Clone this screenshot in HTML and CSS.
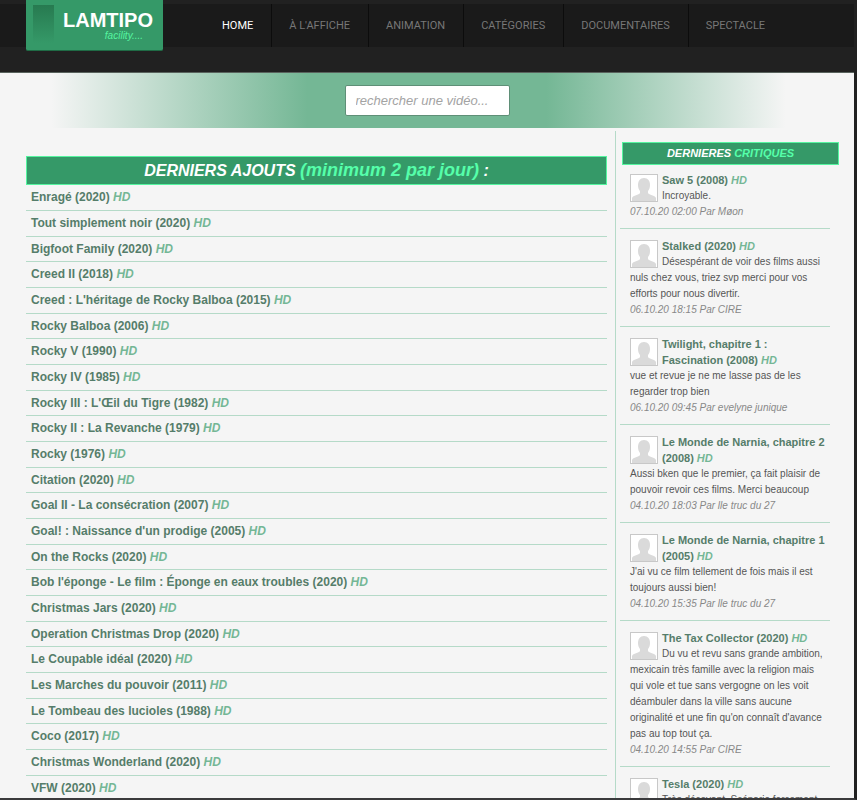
FILE: index.html
```html
<!DOCTYPE html>
<html lang="fr">
<head>
    <meta charset="UTF-8">
    <meta name="viewport" content="width=device-width, initial-scale=1.0">
    <title>Lamtipo</title>
    <link rel="stylesheet" href="styles.css">
</head>
<body>
    <div class="page">
        <header class="header">
            <div class="topbar">
                <a href="#" class="logo">
                    <span class="logo-mark"></span>
                    <span class="logo-text">
                        <span class="logo-name">LAMTIPO</span>
                        <em class="logo-sub">facility....</em>
                    </span>
                </a>
                <nav class="menu">
                    <a href="#" class="active">HOME</a>
                    <a href="#">À L'AFFICHE</a>
                    <a href="#">ANIMATION</a>
                    <a href="#">CATÉGORIES</a>
                    <a href="#">DOCUMENTAIRES</a>
                    <a href="#">SPECTACLE</a>
                </nav>
            </div>
        </header>
        <form class="search">
            <input type="text" class="search-input" aria-label="Rechercher une vidéo" placeholder="rechercher une vidéo...">
        </form>
        <div class="content">
            <main class="main">
                <h1 class="main-title">DERNIERS AJOUTS <span>(minimum 2 par jour)</span> :</h1>
                <ul class="films">
                    <li><a href="#">Enragé (2020) <em>HD</em></a></li>
                    <li><a href="#">Tout simplement noir (2020) <em>HD</em></a></li>
                    <li><a href="#">Bigfoot Family (2020) <em>HD</em></a></li>
                    <li><a href="#">Creed II (2018) <em>HD</em></a></li>
                    <li><a href="#">Creed : L'héritage de Rocky Balboa (2015) <em>HD</em></a></li>
                    <li><a href="#">Rocky Balboa (2006) <em>HD</em></a></li>
                    <li><a href="#">Rocky V (1990) <em>HD</em></a></li>
                    <li><a href="#">Rocky IV (1985) <em>HD</em></a></li>
                    <li><a href="#">Rocky III : L'Œil du Tigre (1982) <em>HD</em></a></li>
                    <li><a href="#">Rocky II : La Revanche (1979) <em>HD</em></a></li>
                    <li><a href="#">Rocky (1976) <em>HD</em></a></li>
                    <li><a href="#">Citation (2020) <em>HD</em></a></li>
                    <li><a href="#">Goal II - La consécration (2007) <em>HD</em></a></li>
                    <li><a href="#">Goal! : Naissance d'un prodige (2005) <em>HD</em></a></li>
                    <li><a href="#">On the Rocks (2020) <em>HD</em></a></li>
                    <li><a href="#">Bob l'éponge - Le film : Éponge en eaux troubles (2020) <em>HD</em></a></li>
                    <li><a href="#">Christmas Jars (2020) <em>HD</em></a></li>
                    <li><a href="#">Operation Christmas Drop (2020) <em>HD</em></a></li>
                    <li><a href="#">Le Coupable idéal (2020) <em>HD</em></a></li>
                    <li><a href="#">Les Marches du pouvoir (2011) <em>HD</em></a></li>
                    <li><a href="#">Le Tombeau des lucioles (1988) <em>HD</em></a></li>
                    <li><a href="#">Coco (2017) <em>HD</em></a></li>
                    <li><a href="#">Christmas Wonderland (2020) <em>HD</em></a></li>
                    <li><a href="#">VFW (2020) <em>HD</em></a></li>
                </ul>
            </main>
            <aside class="sidebar">
                <h2 class="side-title">DERNIERES <span>CRITIQUES</span></h2>
                <!-- Shared avatar shape -->
                <svg width="0" height="0" class="defs">
                    <symbol id="avatar" viewBox="0 0 26 26">
                        <path d="M13 3c4 0 6 3 6 7 0 3-1 5-2 6v2c1 2 7 2 8 5v3H1v-3c1-3 7-3 8-5v-2c-1-1-2-3-2-6 0-4 2-7 6-7z" fill="#dadada"/>
                    </symbol>
                </svg>
                <article class="review">
                    <svg class="avatar"><use href="#avatar"/></svg>
                    <h3><a href="#">Saw 5 (2008) <em>HD</em></a></h3>
                    <p>Incroyable.</p>
                    <p class="date">07.10.20 02:00 Par Møon</p>
                </article>
                <article class="review">
                    <svg class="avatar"><use href="#avatar"/></svg>
                    <h3><a href="#">Stalked (2020) <em>HD</em></a></h3>
                    <p>Désespérant de voir des films aussi nuls chez vous, triez svp merci pour vos efforts pour nous divertir.</p>
                    <p class="date">06.10.20 18:15 Par CIRE</p>
                </article>
                <article class="review">
                    <svg class="avatar"><use href="#avatar"/></svg>
                    <h3><a href="#">Twilight, chapitre 1 :<br>Fascination (2008) <em>HD</em></a></h3>
                    <p>vue et revue je ne me lasse pas de les regarder trop bien</p>
                    <p class="date">06.10.20 09:45 Par evelyne junique</p>
                </article>
                <article class="review">
                    <svg class="avatar"><use href="#avatar"/></svg>
                    <h3><a href="#">Le Monde de Narnia, chapitre 2 (2008) <em>HD</em></a></h3>
                    <p>Aussi bken que le premier, ça fait plaisir de pouvoir revoir ces films. Merci beaucoup</p>
                    <p class="date">04.10.20 18:03 Par lle truc du 27</p>
                </article>
                <article class="review">
                    <svg class="avatar"><use href="#avatar"/></svg>
                    <h3><a href="#">Le Monde de Narnia, chapitre 1 (2005) <em>HD</em></a></h3>
                    <p>J'ai vu ce film tellement de fois mais il est toujours aussi bien!</p>
                    <p class="date">04.10.20 15:35 Par lle truc du 27</p>
                </article>
                <article class="review">
                    <svg class="avatar"><use href="#avatar"/></svg>
                    <h3><a href="#">The Tax Collector (2020) <em>HD</em></a></h3>
                    <p>Du vu et revu sans grande ambition, mexicain très famille avec la religion mais qui vole et tue sans vergogne on les voit déambuler dans la ville sans aucune originalité et une fin qu'on connaît d'avance pas au top tout ça.</p>
                    <p class="date">04.10.20 14:55 Par CIRE</p>
                </article>
                <article class="review">
                    <svg class="avatar"><use href="#avatar"/></svg>
                    <h3><a href="#">Tesla (2020) <em>HD</em></a></h3>
                    <p>Très décevant. Scénario forcement</p>
                </article>
            </aside>
        </div>
    </div>
</body>
</html>
```

FILE: styles.css
```css
* {
    margin: 0;
    padding: 0;
    box-sizing: border-box;
}
body {
    font-family: "Liberation Sans", Arial, sans-serif;
    background-color: #212121;
    color: #555;
}
a {
    text-decoration: none;
    color: inherit;
}
.page {
    height: 100vh;
    overflow: hidden;
    background-color: #f5f5f5;
    border-right: 3px solid #212121;
    border-bottom: 2px solid #3a3a3c;
}
/* Header */
.header {
    background-color: #212121;
    padding: 4px 0 25px;
    border-bottom: 1px solid #59635d;
}
.topbar {
    display: flex;
    height: 43px;
    background-color: #1a1a1a;
}
.logo {
    display: flex;
    gap: 9px;
    width: 137px;
    height: 51px;
    margin: -4px 42px 0 26px;
    padding: 5px 7px;
    background-color: #359968;
    border-bottom: 1px solid #1f6b45;
    border-radius: 0 0 2px 2px;
}
.logo-mark {
    width: 21px;
    height: 38px;
    background: linear-gradient(#277a50, #359968);
}
.logo-text {
    display: flex;
    flex-direction: column;
}
.logo-name {
    font-size: 20px;
    line-height: 24px;
    padding-top: 3px;
    font-weight: bold;
    color: #fff;
}
.logo-sub {
    font-size: 10px;
    line-height: 8px;
    color: #55f5a0;
    align-self: flex-end;
    padding-right: 10px;
}
.menu {
    display: flex;
}
.menu a {
    padding: 0 18px 0 17px;
    font-family: Roboto, "Liberation Sans", sans-serif;
    font-size: 11px;
    line-height: 43px;
    color: #777;
    border-right: 1px solid #0c0c0c;
}
.menu a:last-child {
    border-right: none;
}
.menu a.active,
.menu a:hover {
    color: #fff;
}
/* Search band */
.search {
    display: flex;
    justify-content: center;
    padding: 12px 0;
    background: linear-gradient(to right, #f5f5f5 6%, #74b795 36%, #74b795 64%, #f5f5f5 92%);
}
.search-input {
    width: 165px;
    height: 31px;
    padding: 0 10px;
    font-family: inherit;
    font-size: 13px;
    font-style: italic;
    color: #555;
    background-color: #fff;
    border: 1px solid #5f8f77;
    border-radius: 2px;
}
.search-input::placeholder {
    color: #a3a3a3;
}
/* Columns */
.content {
    display: flex;
    padding: 3px 15px 0 26px;
}
.main {
    flex: 1;
    padding: 25px 8px 0 0;
}
.main-title {
    font-size: 16px;
    line-height: 27px;
    font-style: italic;
    text-align: center;
    color: #fff;
    background-color: #359968;
    border: 1px solid #55f5a0;
}
.main-title span,
.side-title span {
    color: #55ffaa;
}
.main-title span {
    font-size: 18px;
}
.films {
    list-style: none;
}
.films li {
    padding-left: 5px;
    font-size: 12px;
    line-height: 25px;
    font-weight: bold;
    color: #557d6a;
    border-bottom: 1px solid #b5dac8;
}
.films li:nth-child(3n) {
    line-height: 24px;
}
.films em,
.review em {
    color: #74b795;
}
/* Reviews */
.sidebar {
    width: 224px;
    padding-top: 11px;
    border-left: 1px solid #b5dac8;
}
.side-title {
    margin: 0 0 0 6px;
    font-size: 11px;
    line-height: 21px;
    font-style: italic;
    text-align: center;
    color: #fff;
    background-color: #359968;
    border: 1px solid #55f5a0;
}
.defs {
    display: block;
}
.review {
    margin: 0 9px 0 4px;
    padding: 7px 0 8px 10px;
    font-size: 10px;
    line-height: 16px;
    border-bottom: 1px solid #b5dac8;
}
.review + .review {
    padding-top: 9px;
}
.avatar {
    float: left;
    width: 28px;
    height: 28px;
    margin: 2px 4px 0 0;
    background-color: #fff;
    border: 1px solid #c8c8c8;
}
.review h3 {
    font-size: 11px;
    line-height: 16px;
    color: #557d6a;
}
.date {
    font-style: italic;
    color: #888;
}
```
